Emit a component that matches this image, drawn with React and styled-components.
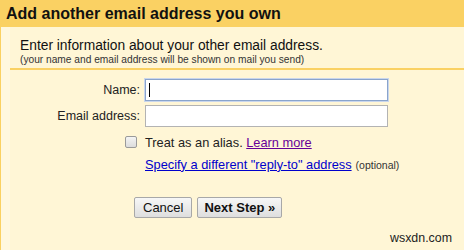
import React from "react";
import styled, { createGlobalStyle } from "styled-components";

const GlobalStyle = createGlobalStyle`
  html, body {
    margin: 0;
    padding: 0;
    background: #fff6d6;
    font-family: "Liberation Sans", Arial, sans-serif;
  }
`;

const Page = styled.div`
  width: 464px;
  height: 250px;
  overflow: hidden;
  position: relative;
  background: #fff6d6;
`;

const TitleBar = styled.div`
  height: 27px;
  background: #fad163;
  padding-left: 6px;
  display: flex;
  align-items: center;
  font-size: 16px;
  font-weight: bold;
  color: #111;
  box-sizing: border-box;
`;

const Body = styled.div`
  border-left: 1px solid #fad163;
  padding-left: 9px;
  height: 223px;
  box-sizing: border-box;
  background: linear-gradient(to right, #fff8df 0, #fff8df 9px, #fff6d6 9px);
`;

const Intro = styled.div`
  height: 43px;
  padding: 10px 0 0 10px;
  box-sizing: border-box;
  border-bottom: 2px solid #fad163;
`;

const IntroTitle = styled.div`
  font-size: 13.8px;
  color: #111;
  line-height: 17px;
`;

const IntroNote = styled.div`
  font-size: 10.2px;
  color: #333;
  line-height: 12px;
`;

const Form = styled.div`
  padding-top: 9px;
  display: flex;
  flex-direction: column;
  gap: 4px;
`;

const Row = styled.div`
  display: flex;
  align-items: center;
  gap: 5px;
`;

const Label = styled.label`
  width: 130px;
  text-align: right;
  font-size: 12.5px;
  color: #222;
`;

const Input = styled.input`
  width: 243px;
  height: 22px;
  box-sizing: border-box;
  margin: 0;
  border: 1px solid #b3b3b3;
  background: #fff;
  outline: none;
  padding: 0 0 0 3px;
  font-family: "Liberation Sans", Arial, sans-serif;
  font-size: 13px;
`;

const Caret = styled.span`
  display: inline-block;
  width: 1px;
  height: 14px;
  background: #000;
`;

const FocusedInput = styled.div`
  width: 243px;
  height: 22px;
  box-sizing: border-box;
  border: 1px solid #8aa4cc;
  box-shadow: 0 0 0 1px #c9d6ec;
  background: #fff;
  display: flex;
  align-items: center;
  padding-left: 3px;
`;

const OptionRow = styled.div`
  display: flex;
  align-items: center;
  padding-left: ${(p) => p.$indent}px;
  height: ${(p) => p.$h}px;
  font-size: 12.8px;
  color: #222;
  gap: 8px;
`;

const Check = styled.span`
  width: 12px;
  height: 12px;
  box-sizing: border-box;
  border: 1px solid #9a9a9a;
  border-radius: 2px;
  background: linear-gradient(#f4f4f4, #dcdcdc);
`;

const Link = styled.a`
  color: ${(p) => (p.$visited ? "#660099" : "#0000cc")};
  text-decoration: underline;
  cursor: pointer;
`;

const Optional = styled.span`
  font-size: 10.5px;
  color: #333;
  margin-left: 4px;
`;

const Buttons = styled.div`
  display: flex;
  gap: 5px;
  padding-left: 124px;
  margin-top: 26px;
`;

const Button = styled.button`
  height: 21px;
  margin: 0;
  padding: 0 ${(p) => (p.$primary ? 6 : 8)}px;
  box-sizing: border-box;
  border: 1px solid #a8a8a8;
  border-radius: 2px;
  background: linear-gradient(#f7f7f7, #dedede);
  font-family: "Liberation Sans", Arial, sans-serif;
  font-size: 13px;
  font-weight: ${(p) => (p.$primary ? "bold" : "normal")};
  color: #111;
`;

const Watermark = styled.div`
  position: absolute;
  right: 12px;
  bottom: 5px;
  font-size: 12.4px;
  color: #222;
`;

export default function App() {
  return (
    <>
      <GlobalStyle />
      <Page>
        <TitleBar>Add another email address you own</TitleBar>
        <Body>
          <Intro>
            <IntroTitle>Enter information about your other email address.</IntroTitle>
            <IntroNote>(your name and email address will be shown on mail you send)</IntroNote>
          </Intro>
          <Form>
            <Row>
              <Label>Name:</Label>
              <FocusedInput>
                <Caret />
              </FocusedInput>
            </Row>
            <Row>
              <Label>Email address:</Label>
              <Input type="text" />
            </Row>
            <OptionRow $indent={115} $h={22}>
              <Check />
              <span>
                Treat as an alias. <Link $visited>Learn more</Link>
              </span>
            </OptionRow>
            <OptionRow $indent={135} $h={14}>
              <span>
                <Link>Specify a different "reply-to" address</Link>
                <Optional>(optional)</Optional>
              </span>
            </OptionRow>
          </Form>
          <Buttons>
            <Button>Cancel</Button>
            <Button $primary>Next Step »</Button>
          </Buttons>
        </Body>
        <Watermark>wsxdn.com</Watermark>
      </Page>
    </>
  );
}
